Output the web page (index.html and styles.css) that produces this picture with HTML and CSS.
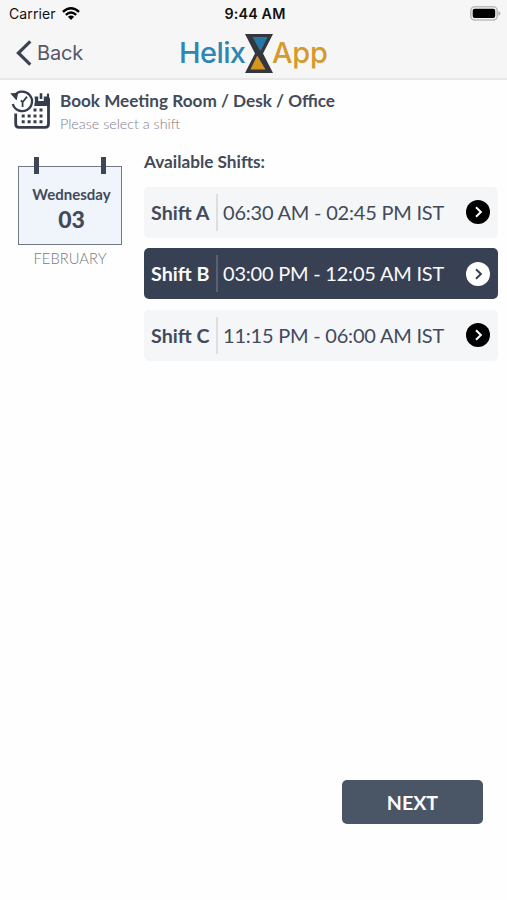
FILE: index.html
```html
<!DOCTYPE html>
<html lang="en">
<head>
<meta charset="utf-8">
<title>Helix App</title>
<link rel="stylesheet" href="styles.css">
</head>
<body>
<header class="top">
  <div class="status">
    <div class="carrier"><span>Carrier</span>
      <svg width="18" height="13" viewBox="0 0 18 13"><g fill="none" stroke="#000" stroke-width="2.3"><path d="M.9 4.8Q9-2.3 17.1 4.8"/><path d="M3.8 7.8Q9 3.3 14.2 7.8"/></g><path d="M5.9 9.8Q9 7.2 12.1 9.8L9 13Z"/></svg>
    </div>
    <div class="time">9:44 AM</div>
    <svg class="battery" width="31" height="15" viewBox="0 0 31 15"><rect x=".8" y=".8" width="26.4" height="13.2" rx="4" fill="#f7f6f7" stroke="#bcbcbc" stroke-width="1.6"/><rect x="2.7" y="2.8" width="22.5" height="9.2" rx="2" /><path d="M28.5 5Q32.2 7.4 28.5 9.8Z" fill="#aaa"/></svg>
  </div>
  <nav class="nav">
    <div class="back">
      <svg width="17" height="26" viewBox="0 0 17 26"><path d="M15.3 1.4 3.4 13 15.3 24.6" fill="none" stroke="#3b4354" stroke-width="3.2"/></svg>
      <span>Back</span>
    </div>
    <div class="logo">
      <span class="helix">Helix</span>
      <svg width="28" height="39" viewBox="0 0 28 39"><path d="M0 0H28L18 19.5 28 39H0L10 19.5Z" fill="#35363b"/><path d="M7.5 3H22.6L16 16.5H15Z" fill="#2577a6"/><path d="M12.5 22 20.5 35.5H5.4L12 22Z" fill="#d5951e"/></svg>
      <span class="app">App</span>
    </div>
  </nav>
</header>
<main>
  <section class="intro">
    <svg width="42" height="41" viewBox="0 0 42 41">
      <g fill="none" stroke="#343c4e">
        <path d="M5.7 23.5V34Q5.7 37.3 9 37.3H35.2Q38.5 37.3 38.5 34V12" stroke-width="2.8"/>
        <path d="M4.3 5.6A9.8 9.8 0 1 1 2.8 14" stroke-width="2.3"/>
        <path d="M17 6.6 12.6 12.2V17M13 12.2 10.8 10.6" stroke-width="1.8"/>
        <path d="M31 3.2V9" stroke-width="2.6"/><path d="M38 3.6V7" stroke-width="2.2"/>
      </g>
      <path d="M.2 3.2 8.2 3 6.6 10.4ZM24.6 6.5H28.2V11H33.8V6.5H37Q40 6.5 40 9.5V16H24.2Q25.6 11 24.6 6.5Z" fill="#343c4e"/>
      <path d="M23.5 18.6h3v3h-3zM29.5 18.6h3v3h-3zM11.7 24.4h3v3h-3zM17.6 24.4h3v3h-3zM23.5 24.4h3v3h-3zM29.5 24.4h3v3h-3zM11.7 30.3h3v3h-3zM17.6 30.3h3v3h-3zM23.5 30.3h3v3h-3zM29.5 30.3h3v3h-3z" fill="#343c4e"/>
    </svg>
    <div>
      <h1>Book Meeting Room / Desk / Office</h1>
      <p>Please select a shift</p>
    </div>
  </section>
  <section class="booking">
    <aside class="date">
      <div class="calendar">
        <span class="day">Wednesday</span>
        <span class="number">03</span>
      </div>
      <div class="month">FEBRUARY</div>
    </aside>
    <div class="shifts">
      <h2>Available Shifts:</h2>
      <div class="shift">
        <b>Shift A</b><span class="hours">06:30 AM - 02:45 PM IST</span>
        <svg width="24" height="24" viewBox="0 0 24 24"><circle class="disc" cx="12" cy="12" r="12"/><path class="arrow" d="M10 7.2 14.9 12 10 16.8"/></svg>
      </div>
      <div class="shift selected">
        <b>Shift B</b><span class="hours">03:00 PM - 12:05 AM IST</span>
        <svg width="24" height="24" viewBox="0 0 24 24"><circle class="disc" cx="12" cy="12" r="12"/><path class="arrow" d="M10 7.2 14.9 12 10 16.8"/></svg>
      </div>
      <div class="shift">
        <b>Shift C</b><span class="hours">11:15 PM - 06:00 AM IST</span>
        <svg width="24" height="24" viewBox="0 0 24 24"><circle class="disc" cx="12" cy="12" r="12"/><path class="arrow" d="M10 7.2 14.9 12 10 16.8"/></svg>
      </div>
    </div>
  </section>
</main>
<footer><button class="next">NEXT</button></footer>
</body>
</html>
```
FILE: styles.css
```css
* { box-sizing: border-box; }
body {
  margin: 0;
  height: 900px;
  display: flex;
  flex-direction: column;
  overflow: hidden;
  background: #fefefe;
  color: #434a5a;
  font-family: Lato, sans-serif;
}
svg { display: block; flex: none; }
h1, h2, p { margin: 0; white-space: nowrap; }
.top {
  height: 80px;
  background: #f7f6f7;
  border-bottom: 2px solid #e9e8e9;
  font-family: Inter, sans-serif;
}
.status {
  height: 27px;
  display: grid;
  grid-template-columns: 1fr auto 1fr;
  align-items: center;
  padding: 0 6px 0 9px;
  color: #111;
  font-size: 14px;
}
.carrier { display: flex; align-items: center; gap: 6px; letter-spacing: .1px; }
.carrier svg { margin-top: -1px; }
.time { font-weight: 600; font-size: 14.3px; letter-spacing: .15px; }
.battery { justify-self: end; }
.nav {
  height: 51px;
  display: flex;
  align-items: center;
  padding: 1px 0 0 15px;
}
.back {
  width: 164px;
  display: flex;
  align-items: center;
  gap: 5px;
  color: #535967;
  font-size: 20px;
  letter-spacing: -.2px;
}
.logo { display: flex; align-items: center; font-size: 29px; font-weight: 500; }
.helix { width: 66px; color: #2e86b2; letter-spacing: -.6px; }
.app { color: #d59a2c; letter-spacing: -.3px; margin-left: -1px; }
.helix, .app { margin-top: -2px; }
.intro {
  height: 70px;
  display: flex;
  padding: 10px 0 0 10px;
  gap: 8px;
}
h1 { font-size: 17.15px; line-height: 22px; font-weight: 700; }
.intro p { font-size: 14.3px; line-height: 23px; color: #7e8087; font-weight: 300; }
.booking { display: flex; }
.date { width: 144px; padding: 16px 22px 0 18px; text-align: center; }
.calendar {
  position: relative;
  height: 79px;
  padding-top: 17px;
  display: flex;
  flex-direction: column;
  align-items: center;
  border: 1px solid #727985;
  background: #f0f4fb;
  font-weight: 700;
}
.calendar::before, .calendar::after {
  content: "";
  position: absolute;
  top: -10px;
  width: 5px;
  height: 17px;
  background: #3d4556;
}
.calendar::before { left: 15px; }
.calendar::after { right: 15px; }
.day { padding-left: 3px; font-size: 15px; line-height: 20px; }
.number { padding-left: 3px; font-size: 23px; line-height: 30px; font-weight: 900; }
.month { font-size: 14.8px; line-height: 26px; color: #777a82; font-weight: 300; }
.shifts { width: 354px; display: flex; flex-direction: column; gap: 10.5px; }
h2 { height: 26px; font-size: 17.2px; line-height: 24px; font-weight: 700; }
.shift {
  height: 51px;
  display: flex;
  align-items: center;
  padding: 0 8px 0 7px;
  border-radius: 5px;
  background: #f4f6f8;
  white-space: nowrap;
}
.shift b { width: 65px; font-size: 19.7px; }
.hours {
  height: 37px;
  flex: 1;
  padding-left: 5px;
  border-left: 2px solid #dcdee2;
  font-size: 20px;
  line-height: 37px;
  letter-spacing: -.22px;
}
.disc { fill: #000; }
.arrow { fill: none; stroke: #fff; stroke-width: 2; }
.selected { background: #384154; color: #fafbfd; }
.selected .hours { border-color: #596273; }
.selected .disc { fill: #fff; }
.selected .arrow { stroke: #384154; }
footer { margin-top: auto; padding: 0 24px 76px; display: flex; justify-content: flex-end; }
.next {
  width: 141px;
  height: 44px;
  border: 0;
  border-radius: 5px;
  background: #4a5566;
  color: #fafbfd;
  font: 700 19.6px Lato, sans-serif;
}
```
